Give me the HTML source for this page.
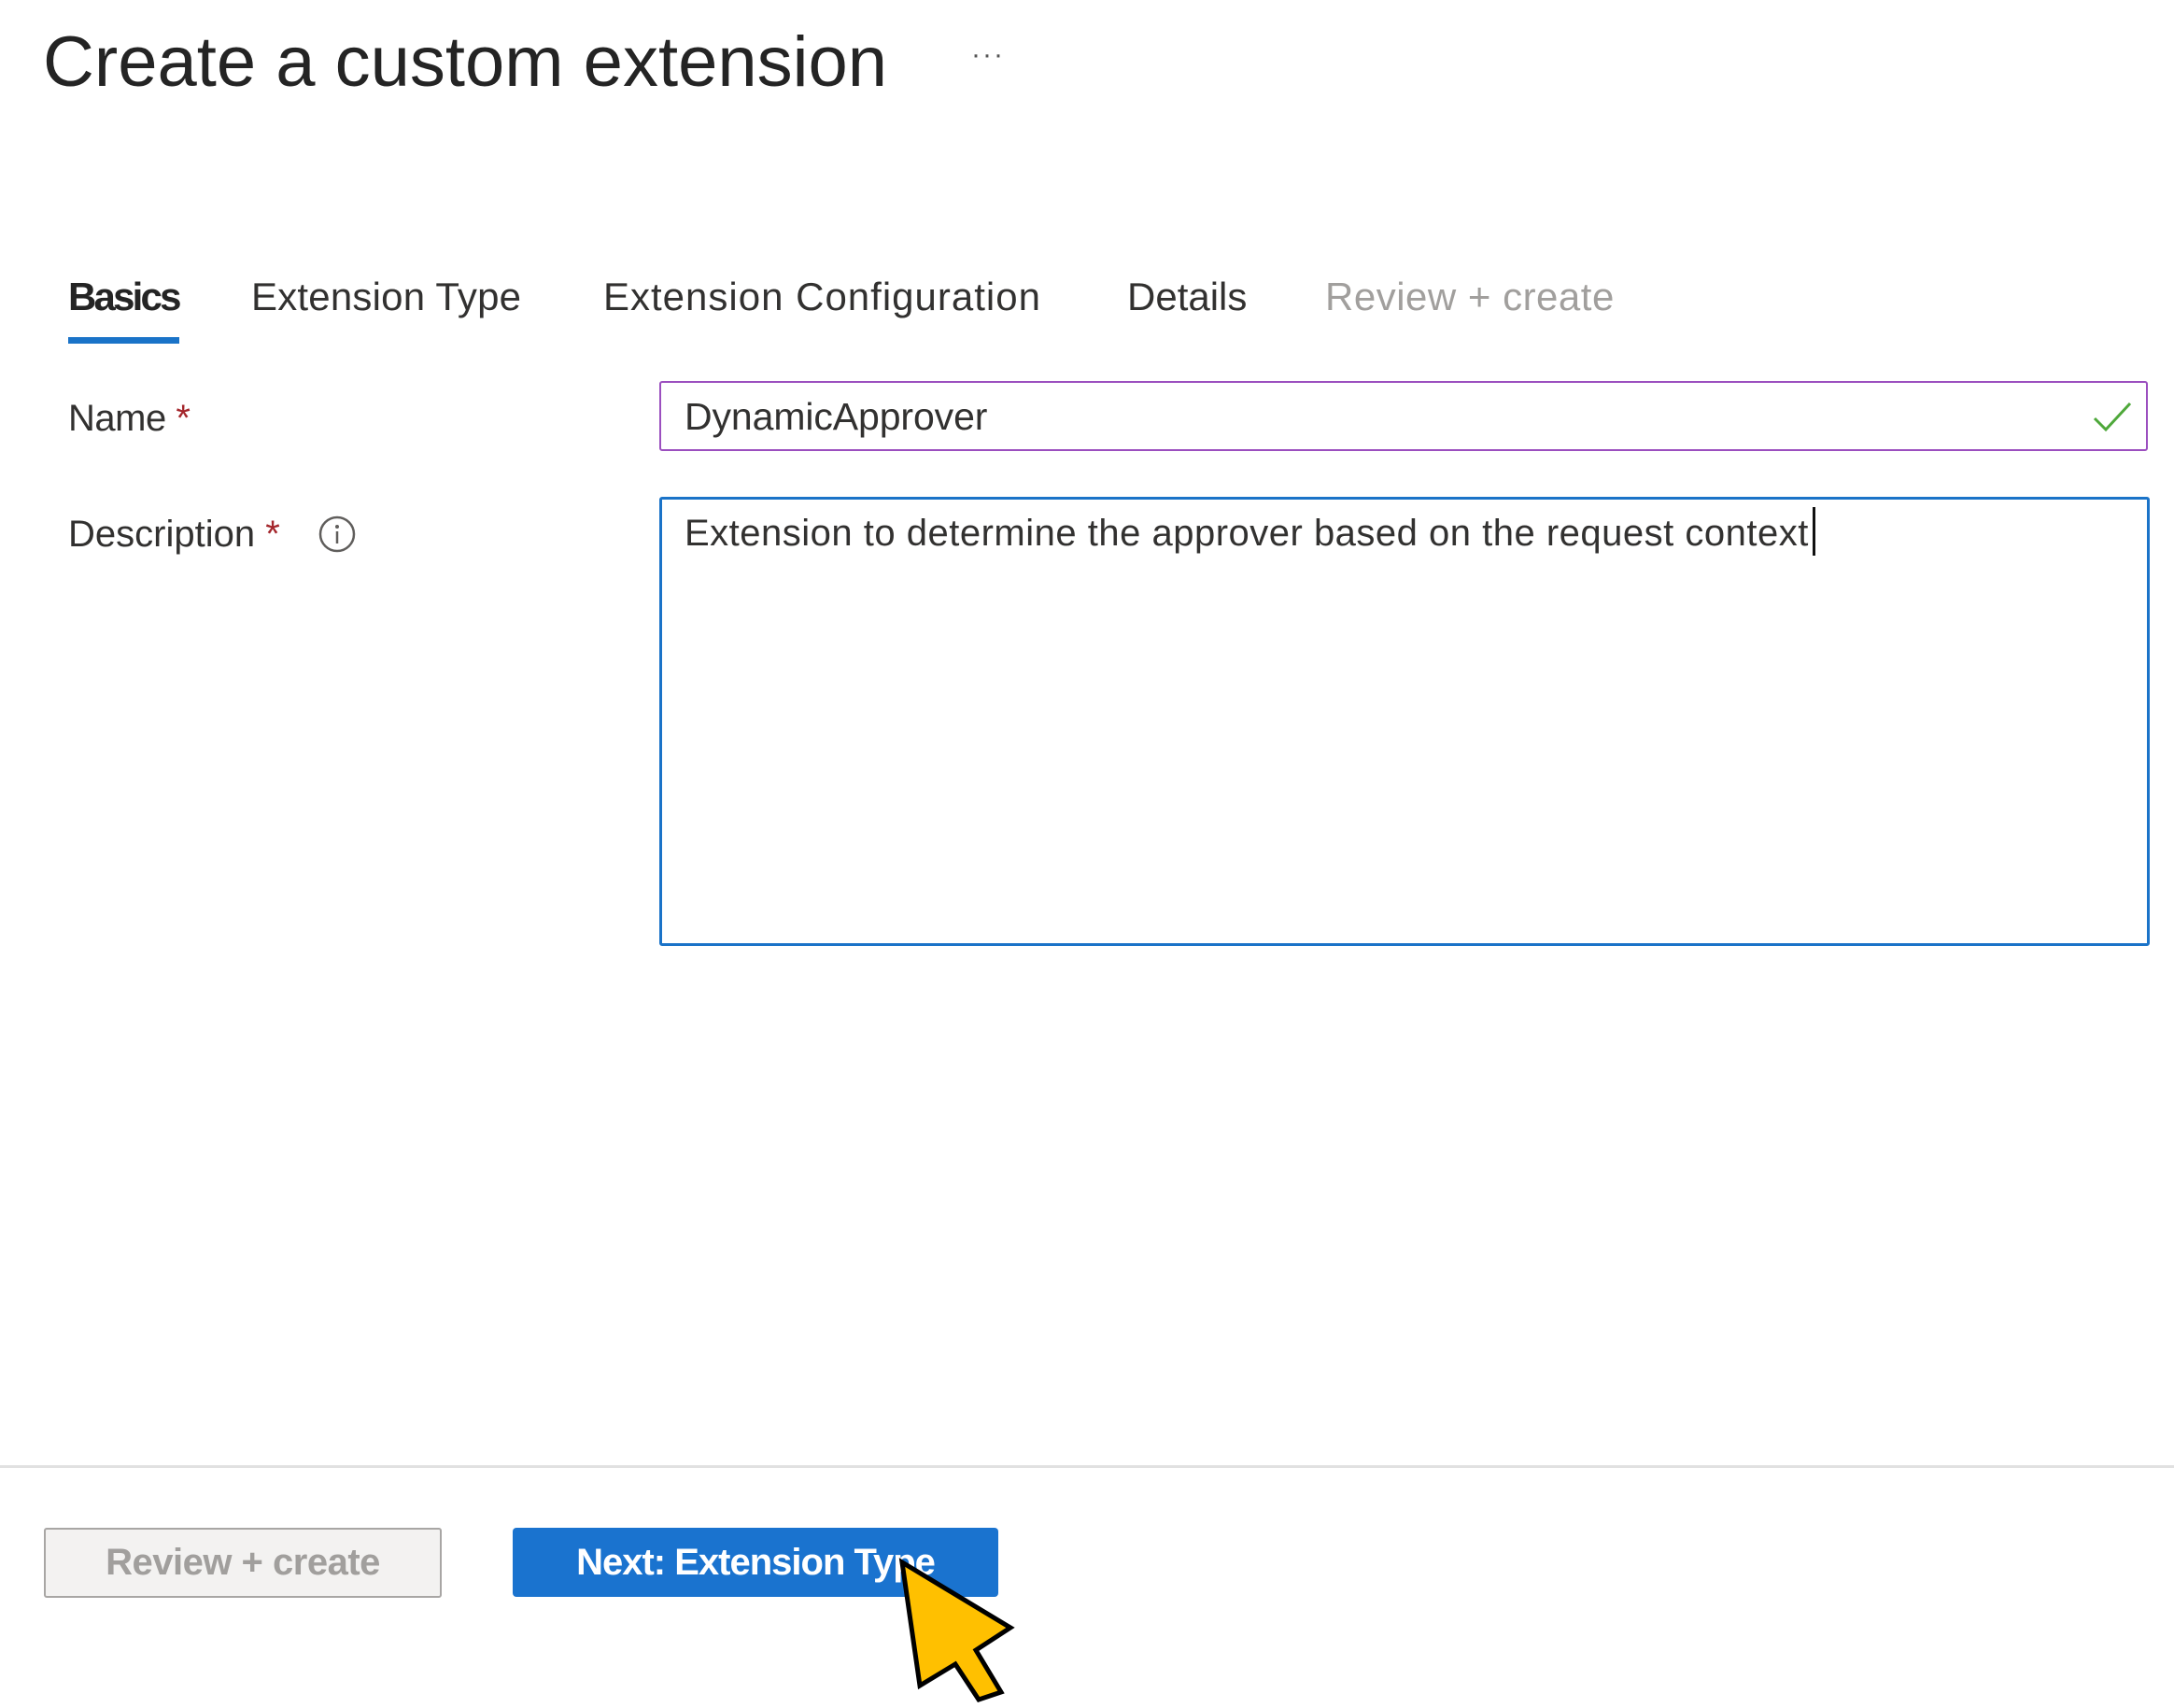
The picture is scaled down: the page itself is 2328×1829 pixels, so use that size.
<!DOCTYPE html>
<html><head><meta charset="utf-8"><style>
html,body{margin:0;padding:0;width:2328px;height:1829px;background:#fff;overflow:hidden;font-family:"Liberation Sans",sans-serif;color:#323130}
.a{position:absolute;white-space:nowrap}
</style></head><body>
<div class="a" style="left:46px;top:17px;font-size:76px;color:#242424;line-height:100px">Create a custom extension</div>
<div class="a" style="left:1040px;top:42px;font-size:30px;color:#555;letter-spacing:2px">···</div>

<div class="a" style="left:73px;top:290px;font-size:42px;line-height:56px;font-weight:bold;color:#242424;letter-spacing:-2.8px">Basics</div>
<div class="a" style="left:269px;top:290px;font-size:42px;line-height:56px;letter-spacing:0.2px;color:#323130">Extension Type</div>
<div class="a" style="left:646px;top:290px;font-size:42px;line-height:56px;letter-spacing:1px;color:#323130">Extension Configuration</div>
<div class="a" style="left:1207px;top:290px;font-size:42px;line-height:56px;letter-spacing:0px;color:#323130">Details</div>
<div class="a" style="left:1419px;top:290px;font-size:42px;line-height:56px;letter-spacing:0.5px;color:#a19f9d">Review + create</div>
<div class="a" style="left:73px;top:361px;width:119px;height:7px;background:#1a73c8"></div>

<div class="a" style="left:73px;top:420px;font-size:40px;line-height:56px;letter-spacing:-0.5px">Name <span style="color:#a4262c">*</span></div>
<div class="a" style="left:706px;top:408px;width:1590px;height:71px;border:2px solid #9b4fbf;border-radius:3px"></div>
<div class="a" style="left:733px;top:418px;font-size:41px;line-height:56px;letter-spacing:-0.1px">DynamicApprover</div>
<svg class="a" style="left:2240px;top:428px" width="44" height="36"><path d="M3 20 L15 32 L41 4" fill="none" stroke="#4ea83a" stroke-width="3"/></svg>

<div class="a" style="left:73px;top:544px;font-size:40px;line-height:56px;letter-spacing:0px">Description <span style="color:#a4262c">*</span></div>
<svg class="a" style="left:340px;top:551px" width="42" height="42"><circle cx="21" cy="21" r="18" fill="none" stroke="#605e5c" stroke-width="2.5"/><circle cx="21" cy="13" r="2" fill="#605e5c"/><path d="M21 18 V31" stroke="#605e5c" stroke-width="2.5"/></svg>
<div class="a" style="left:706px;top:532px;width:1590px;height:475px;border:3px solid #1a73c8;border-radius:3px"></div>
<div class="a" style="left:733px;top:543px;font-size:40px;line-height:56px;letter-spacing:0.5px">Extension to determine the approver based on the request context</div>
<div class="a" style="left:1941px;top:543px;width:3px;height:52px;background:#111"></div>

<div class="a" style="left:0;top:1569px;width:2328px;height:3px;background:#e1e1e1"></div>

<div class="a" style="left:47px;top:1636px;width:422px;height:71px;border:2px solid #a8a6a4;border-radius:3px;background:#f3f2f1;text-align:center;line-height:71px;font-size:40px;color:#a19f9d;font-weight:bold;letter-spacing:-0.5px">Review + create</div>
<div class="a" style="left:549px;top:1636px;width:520px;height:74px;border-radius:4px;background:#1a73cf;text-align:center;line-height:74px;font-size:40px;color:#fff;font-weight:bold;letter-spacing:-1px">Next: Extension Type</div>

<svg class="a" style="left:0;top:0" width="2328" height="1829"><polygon points="966,1673 985,1805 1023,1782 1048,1820 1072,1812 1045,1767 1082,1743" fill="#ffc000" stroke="#000" stroke-width="5" stroke-linejoin="miter"/></svg>
</body></html>
